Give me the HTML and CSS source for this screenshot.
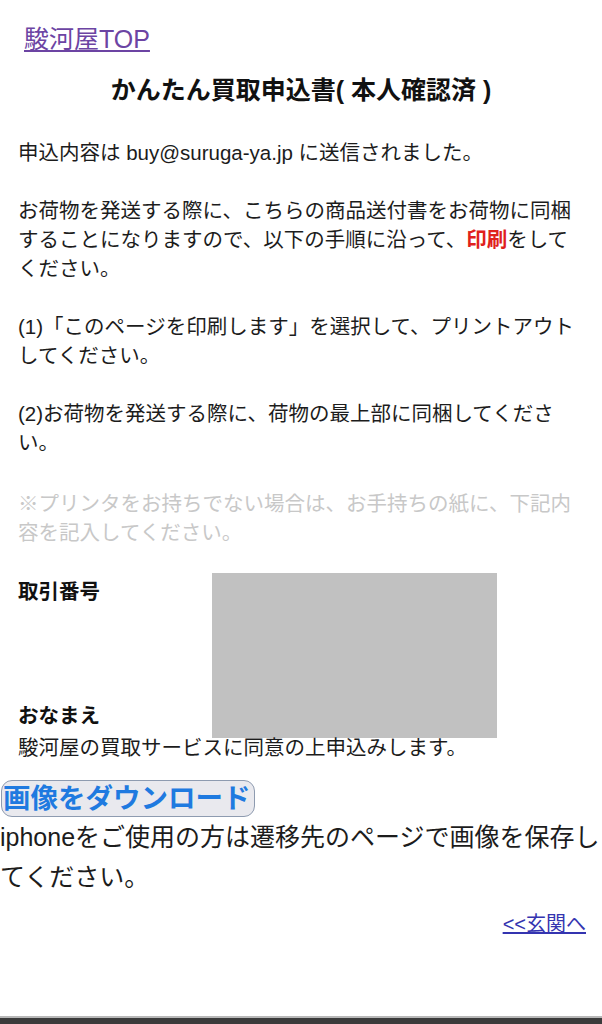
FILE: index.html
```html
<!DOCTYPE html>
<html lang="ja">
<head>
<meta charset="utf-8">
<title>かんたん買取申込書</title>
<link rel="stylesheet" href="styles.css">
</head>
<body>
<div class="page">
  <div class="top"><a class="top-link" href="#">駿河屋TOP</a></div>
  <main class="content">
    <h1 class="title">かんたん買取申込書( 本人確認済 )</h1>
    <p class="text">申込内容は buy@suruga-ya.jp に送信されました。<br><br>お荷物を発送する際に、こちらの商品送付書をお荷物に同梱することになりますので、以下の手順に沿って、<span class="red">印刷</span>をしてください。<br><br>(1)「このページを印刷します」を選択して、プリントアウトしてください。<br><br>(2)お荷物を発送する際に、荷物の最上部に同梱してください。</p>
    <p class="note">※プリンタをお持ちでない場合は、お手持ちの紙に、下記内容を記入してください。</p>
    <div class="form-row">
      <div class="labels">
        <div class="label">取引番号</div>
        <div class="label label-name">おなまえ</div>
      </div>
      <div class="placeholder"></div>
    </div>
    <p class="text">駿河屋の買取サービスに同意の上申込みします。</p>
  </main>
  <div class="dl"><button class="dl-btn" type="button">画像をダウンロード</button></div>
  <p class="iphone">iphoneをご使用の方は遷移先のページで画像を保存してください。</p>
  <div class="back"><a class="back-link" href="#">&lt;&lt;玄関へ</a></div>
  <div class="bottom-bar"></div>
</div>
</body>
</html>
```

FILE: styles.css
```css
html, body {
  margin: 0;
  padding: 0;
  background: #ffffff;
}
body {
  font-family: "Liberation Sans", "Noto Sans CJK JP", sans-serif;
  color: #1c1c1c;
}
.page {
  display: flex;
  flex-direction: column;
  min-height: 100vh;
}
.top {
  padding: 24px 0 0 24px;
  line-height: 30px;
  font-size: 25px;
}
.top-link {
  color: #6c44a3;
  text-decoration: underline;
  text-underline-offset: 2px;
}
.content {
  padding: 0 18px;
}
.title {
  margin: 18px 0 0;
  font-size: 25px;
  line-height: 36px;
  font-weight: bold;
  text-align: center;
  color: #111;
}
.text {
  margin: 0;
  font-size: 20.5px;
  line-height: 29px;
}
.content .title + .text {
  margin-top: 30px;
}
.red {
  color: #e0201c;
  font-weight: bold;
}
.note {
  margin: 32px 0 0;
  font-size: 20.5px;
  line-height: 29px;
  color: #c8c8c8;
}
.form-row {
  display: flex;
  align-items: flex-start;
  margin-top: 26px;
}
.labels {
  width: 194px;
  flex: none;
  padding-top: 4px;
}
.label {
  font-size: 20.5px;
  line-height: 29px;
  font-weight: bold;
  color: #111;
}
.label-name {
  margin-top: 95px;
}
.placeholder {
  width: 285px;
  height: 165px;
  background: #c1c1c1;
  margin-bottom: -5px;
}
.dl {
  margin-top: 18px;
  padding-left: 1px;
}
.dl-btn {
  font-family: "Liberation Sans", "Noto Sans CJK JP", sans-serif;
  font-size: 27.5px;
  line-height: 35px;
  font-weight: bold;
  color: #1f7ae0;
  background: #e9e9ee;
  border: 1px solid #8e9bb0;
  border-radius: 11px;
  padding: 0 3px 0 1px;
  margin: 0;
}
.iphone {
  margin: 0;
  font-size: 25px;
  line-height: 40px;
  color: #1c1c1c;
}
.back {
  margin-top: 13px;
  padding-right: 16px;
  text-align: right;
  font-size: 20px;
  line-height: 29px;
}
.back-link {
  color: #3434b0;
  text-decoration: underline;
}
.bottom-bar {
  margin-top: auto;
  height: 6px;
  background: #3b3b3b;
  border-top: 2px solid #b8b8b8;
}
```
